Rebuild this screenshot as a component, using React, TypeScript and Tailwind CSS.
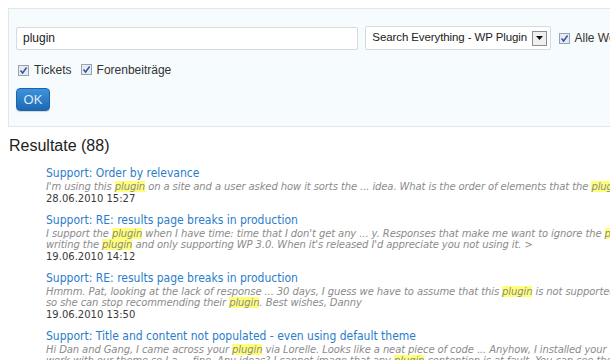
import React from "react";

const Check = () => (
  <span className="inline-flex w-[11px] h-[11px] border border-[#9aa3ad] bg-[#e6ebf2] items-center justify-center shrink-0">
    <svg width="9" height="9" viewBox="0 0 9 9">
      <path d="M1.5 4.5 L3.6 7 L7.6 1.5" fill="none" stroke="#2d4fa8" strokeWidth="1.4" />
    </svg>
  </span>
);

const Hl = ({ children }: { children: React.ReactNode }) => (
  <span className="bg-[#ffff77]">{children}</span>
);

type Result = {
  title: string;
  lines: React.ReactNode[];
  date: string;
};

const results: Result[] = [
  {
    title: "Support: Order by relevance",
    lines: [
      <>I'm using this <Hl>plugin</Hl> on a site and a user asked how it sorts the ... idea. What is the order of elements that the <Hl>plugin</Hl> uses</>,
    ],
    date: "28.06.2010 15:27",
  },
  {
    title: "Support: RE: results page breaks in production",
    lines: [
      <>I support the <Hl>plugin</Hl> when I have time: time that I don't get any ... y. Responses that make me want to ignore the <Hl>plugin</Hl></>,
      <>writing the <Hl>plugin</Hl> and only supporting WP 3.0. When it's released I'd appreciate you not using it. &gt;</>,
    ],
    date: "19.06.2010 14:12",
  },
  {
    title: "Support: RE: results page breaks in production",
    lines: [
      <>Hmmm. Pat, looking at the lack of response ... 30 days, I guess we have to assume that this <Hl>plugin</Hl> is not supported</>,
      <>so she can stop recommending their <Hl>plugin</Hl>. Best wishes, Danny</>,
    ],
    date: "19.06.2010 13:50",
  },
  {
    title: "Support: Title and content not populated - even using default theme",
    lines: [
      <>Hi Dan and Gang, I came across your <Hl>plugin</Hl> via Lorelle. Looks like a neat piece of code ... Anyhow, I installed your</>,
      <>work with our theme so I a ... fine. Any ideas? I cannot image that any <Hl>plugin</Hl> contention is at fault. You can see the</>,
    ],
    date: "17.06.2010 09:31",
  },
];

export default function App() {
  return (
    <div className="w-[610px] h-[360px] overflow-hidden bg-white font-['Liberation_Sans',Arial,sans-serif] text-[#333]">
      <div className="pt-2 pl-2">
        <div className="w-[640px] border border-[#e4e7e9] bg-[#f6fbfd] pl-[7px] pt-[17px] pb-[15px]">
          <div className="flex items-center">
            <div className="w-[344px] h-[23px] bg-white border border-[#d6dadd] rounded-[2px] flex items-center pl-[6px] text-[12px] text-[#222]">
              plugin
            </div>
            <div className="ml-[7px] w-[186px] h-[24px] bg-white border border-[#d6dadd] rounded-[2px] flex items-center pl-[6px] pr-[3px] text-[11.5px] text-[#222]">
              <span className="flex-1 whitespace-nowrap tracking-[-0.1px]">Search Everything - WP Plugin</span>
              <span className="w-[15px] h-[15px] border border-[#8a8f95] bg-[#f0f0f0] flex items-center justify-center">
                <svg width="7" height="4" viewBox="0 0 7 4">
                  <path d="M0 0 H7 L3.5 4 Z" fill="#111" />
                </svg>
              </span>
            </div>
            <div className="ml-[8px] flex items-center gap-[5px] text-[12px] text-[#333] whitespace-nowrap">
              <Check />
              <span>Alle Websites</span>
            </div>
          </div>
          <div className="flex items-center mt-[11px] text-[12px] text-[#333] pl-[2px]">
            <Check />
            <span className="ml-[5px]">Tickets</span>
            <span className="ml-[9px]"><Check /></span>
            <span className="ml-[5px]">Forenbeiträge</span>
          </div>
          <button className="mt-[9px] w-[34px] h-[23px] rounded-[4px] bg-gradient-to-b from-[#3d93dc] to-[#1d68b3] border border-[#1c63a8] text-[#dcebf8] text-[13px] flex items-center justify-center shadow-[0_1px_1px_rgba(0,0,0,0.15)]">
            OK
          </button>
        </div>
      </div>

      <h2 className="ml-[9px] mt-[9px] text-[16px] leading-[20px] text-[#222]">Resultate (88)</h2>

      <div className="ml-[46px] mt-[10px]">
        {results.map((r, i) => (
          <div key={i} className="mb-[8px] whitespace-nowrap">
            <div className="font-['DejaVu_Sans_Condensed','DejaVu_Sans',Tahoma,sans-serif] text-[12px] leading-[15px] text-[#2a7dc9]">{r.title}</div>
            {r.lines.map((l, j) => (
              <div key={j} className="font-['DejaVu_Sans',Verdana,sans-serif] text-[10px] leading-[11.5px] italic text-[#8b8b8b] tracking-[-0.1px]">{l}</div>
            ))}
            <div className="font-['DejaVu_Sans',Verdana,sans-serif] text-[10px] leading-[12px] text-[#3a3a3a]">{r.date}</div>
          </div>
        ))}
      </div>
    </div>
  );
}
